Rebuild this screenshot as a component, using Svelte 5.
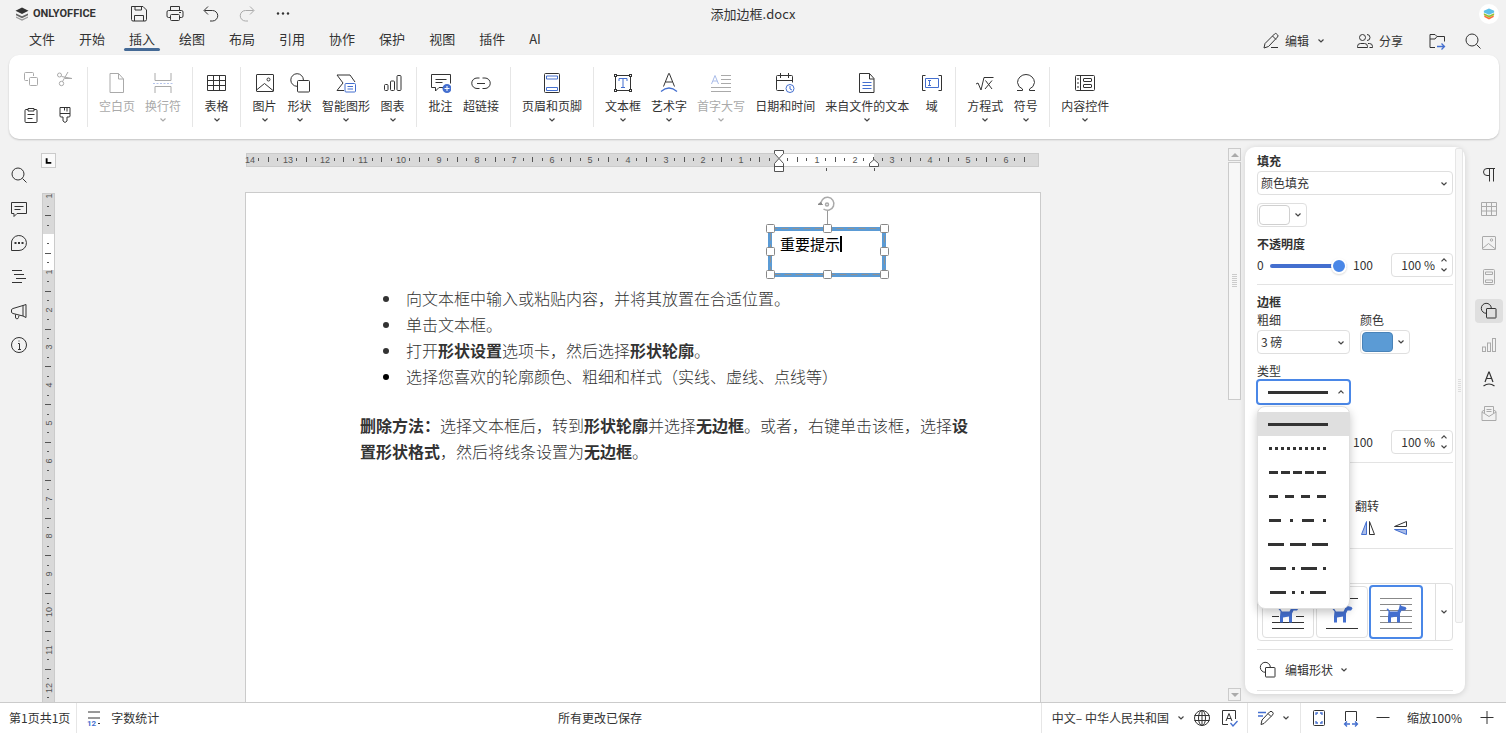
<script>
  const B = '#446fcf';
  const icons = {
    save: `<path d="M2.500 2.500h11.500l3.500 3.500v9.500a1.500 1.500 0 0 1-1.500 1.500H4a1.500 1.500 0 0 1-1.500-1.500z"/><path d="M6 2.500v3.500h6.500V2.500M5.500 17V11.500h9V17"/>`,
    print: `<path d="M5.500 6.500v-4h9v4M5.500 13.500h-2a1.500 1.500 0 0 1-1.500-1.500V8A1.500 1.500 0 0 1 3.500 6.500h13A1.500 1.500 0 0 1 18 8v4a1.500 1.500 0 0 1-1.500 1.500h-2"/><rect x="5.500" y="10.500" width="9" height="6" rx="1"/><path d="M14 8.500h2"/>`,
    undo: `<path d="M7 2.500L3 6.500l4 4M3.500 6.500h8a5 5 0 0 1 0 10.500H9"/>`,
    redo: `<path d="M13 2.500l4 4-4 4M16.500 6.500h-8a5 5 0 0 0 0 10.500H11"/>`,
    dots: `<g fill="currentColor" stroke="none"><circle cx="5" cy="9.500" r="1.200"/><circle cx="10" cy="9.500" r="1.200"/><circle cx="15" cy="9.500" r="1.200"/></g>`,
    copy: `<path d="M7 11.500H4.500a1 1 0 0 1-1-1v-6a1 1 0 0 1 1-1h7a1 1 0 0 1 1 1V7"/><rect x="8.500" y="8.500" width="8" height="8" rx="1"/>`,
    cut: `<circle cx="4.500" cy="6" r="2"/><circle cx="6.500" cy="14.500" r="2.200"/><path d="M6.500 7.500L17 9.500M7.500 12.500L13 3M10 9.500h7"/>`,
    paste: `<path d="M7 4.500H5a1 1 0 0 0-1 1v11a1 1 0 0 0 1 1h10a1 1 0 0 0 1-1v-11a1 1 0 0 0-1-1h-2M7 3.500h6v2.500H7zM6.500 9.500h7M6.500 13.500h5"/>`,
    brush: `<path d="M5 2.500h10v8.500a1 1 0 0 1-1 1h-2v4l-2 1.500L8 16v-4H6a1 1 0 0 1-1-1zM5 8.500h10M9.500 3v2.500M12 3v3.500"/>`,
    page: `<path d="M3 .500h8.500l5 5.500v13.500H3zM11.500 .500V6h5"/>`,
    breaks: `<path d="M2 0v7.500h16V0M2 20v-6.500h16V20"/><path stroke="#b4c4ec" stroke-dasharray="2 1.500" d="M0 10.500h20"/>`,
    table: `<path d="M.5 2.500h18v15h-18zM6.500 2.500v15M12.500 2.500v15M.5 7.500h18M.5 12.500h18"/>`,
    image: `<rect x="1.500" y="1.500" width="17" height="17" rx=".5"/><path d="M1.500 17l8-6.500 8.500 7"/><circle cx="13.500" cy="6.500" r="1.500"/>`,
    shapes: `<path d="M7 13.300A6.300 6.300 0 1 1 13.400 7"/><rect x="7.500" y="7.500" width="12" height="11.500" rx="1"/>`,
    smart: `<path d="M8 17.500H1l6-7.500-6-8h13l5 7"/><rect x="9" y="10.500" width="10.500" height="8.500" rx="1" stroke="${B}"/><path stroke="${B}" d="M11.500 13.500h5.500M11.500 16h5.500"/>`,
    chart: `<rect x="1.500" y="11.500" width="3.500" height="6" rx="1"/><rect x="7.500" y="8" width="4" height="9.500" rx="1"/><rect x="14" y="2.500" width="4" height="15" rx="1"/>`,
    comment: `<path d="M12 14.500H8L4.500 18v-3.500h-4v-13h19v9"/><path d="M4.500 6.500h11M4.500 9.500h7"/><circle cx="16" cy="15.500" r="4.500" fill="${B}" stroke="none"/><path stroke="#fff" d="M16 13v5M13.500 15.500h5"/>`,
    link: `<path d="M8.500 5H6a5 5 0 0 0 0 10.500h2.500M11.500 5H14a5 5 0 0 1 0 10.500h-2.500M6 10.500h8"/>`,
    header: `<rect x="2.500" y=".5" width="15" height="19" rx="1"/><path stroke="${B}" d="M4.500 3h11v3h-11zM4.500 14.500h11v3h-11z"/>`,
    textbox: `<path d="M3 2.500h14M3 17.500h14M2.500 3v14M17.500 3v14"/><g fill="#fff"><rect x="1.500" y="1.500" width="2" height="2"/><rect x="16.500" y="1.500" width="2" height="2"/><rect x="1.500" y="16.500" width="2" height="2"/><rect x="16.500" y="16.500" width="2" height="2"/></g><path stroke="${B}" d="M6 8V5.500h8V8M10 5.500v9M8 14.500h4"/>`,
    wordart: `<path d="M4.500 13.500L9.700 .500h.6l5.200 13M6.500 9h7"/><path stroke="${B}" stroke-width="1.300" d="M2 18.500q8-7 16 0"/>`,
    dropcap: `<path stroke="#a9bce9" d="M.500 11L4 2.500 7.500 11M2 8h4"/><path d="M10 2.500h10M10 6.500h10M10 10.500h10M0 14.500h20M0 18.500h20"/>`,
    calendar: `<path d="M9 17.500H2.500a1 1 0 0 1-1-1v-13a1 1 0 0 1 1-1h14a1 1 0 0 1 1 1v6M1.500 7.500h16M5.500 0v5M13.500 0v5"/><circle cx="15" cy="15.500" r="4" stroke="${B}"/><path stroke="${B}" d="M15 13v3l2 1"/>`,
    doc: `<path d="M2.500 .500h10l4.500 5v14H2.500zM12.500 .500V6H17"/><path stroke="${B}" d="M5.500 9.500h9M5.500 12.500h9M5.500 15.500h9"/>`,
    field: `<path d="M3.500 2.500h-3v15h3M16.500 2.500h3v15h-3"/><path stroke="${B}" d="M3.500 5.500h13v9h-13zM6 7.500h3M6 12.500h3M7.500 7.500v5"/>`,
    equation: `<path d="M1 11l2-1 3 7L9 4.500h9.500M10.500 7.500l6.500 8.500M17 7.500l-7 8.500"/>`,
    omega: `<path d="M1 17.500h5.500v-1.500A8.300 8 0 0 1 1.500 9.500 8.500 8.300 0 0 1 10 1.500a8.500 8.300 0 0 1 8.500 8 8.300 8 0 0 1-5 6.500v1.500H19"/>`,
    controls: `<rect x=".5" y="2.500" width="19" height="15" rx="1"/><path d="M5.500 2.500v15M2 6h2M2 10h2M2 14h2"/><rect x="8.500" y="5.500" width="8" height="3" rx=".5"/><rect x="8.500" y="11.500" width="8" height="3" rx=".5"/>`,
    pencil: `<path d="M3 17l1-4.500L13.500 3a1.500 1.500 0 0 1 2.200 0l.8.800a1.500 1.500 0 0 1 0 2.200L7.500 15.500zM11.500 5l3.500 3.500M10 16.500h7"/>`,
    people: `<circle cx="7.500" cy="6.500" r="3"/><path d="M12 3.500a3 3 0 1 1 0 6M2.500 16.500v-1a3 3 0 0 1 3-3h4a3 3 0 0 1 3 3v1zM13 12.500h1.500a3 3 0 0 1 3 3v1h-3"/>`,
    folder: `<path d="M8 16.500H3V3.500h5l2 2h7.500v5M3 8h5l2-2.500"/><path stroke="${B}" stroke-width="1.300" d="M10 15.500h7.500M14.500 12.500l3 3-3 3"/>`,
    search: `<circle cx="9" cy="9" r="6"/><path d="M13.500 13.500l4 4"/>`,
    note: `<path d="M2.500 3.500h15v11H8l-3 3v-3H2.500zM5.500 7.500h9M5.500 10.500h6"/>`,
    chat: `<path d="M2.500 17.500v-6.500a7.500 7.500 0 1 1 7.500 6.500z"/><g fill="currentColor" stroke="none"><path d="M5.500 9h2v2h-2zM9 9h2v2H9zM12.500 9h2v2h-2z"/></g>`,
    outline: `<path d="M3 3.500h10M5 7.500h10M7 11.500h10M3 15.500h10"/>`,
    horn: `<path d="M14 4.500L4 7.500l-1.500 1v3l1.500 1 10 2.500M14 4.500l3-1v13l-3-1.500zM6.500 13.500v2.500a1.500 1.500 0 0 0 3 .5l.5-2"/>`,
    info: `<circle cx="10" cy="10" r="7.500"/><path d="M9 8.500h1.500V14M9 14.500h3M10 5.500v1"/>`,
    para: `<path d="M16 3.500H8a3.500 3.500 0 0 0 0 7h2.500M10.500 3.500v13M14.500 3.500v13"/>`,
    tableS: `<path d="M2.500 3.500h15v13h-15zM7.500 3.500v13M12.500 3.500v13M2.500 7.500h15M2.500 12h15"/>`,
    imageS: `<rect x="3.500" y="3.500" width="13" height="13" rx=".5"/><path d="M3.500 15.500l6-5 7 5.500"/><circle cx="12.500" cy="7" r="1.200"/>`,
    headerS: `<rect x="4.500" y="2.500" width="11" height="15" rx="1"/><path d="M6.500 5h7v2.500h-7zM6.500 13h7v2.500h-7z"/>`,
    shapesS: `<path d="M7.500 12.300A5 5 0 1 1 12.300 7"/><rect x="7.500" y="7.500" width="9.500" height="9.500" rx=".5"/>`,
    chartS: `<rect x="3.500" y="12" width="3" height="4.500"/><rect x="8.500" y="8" width="3" height="8.500"/><rect x="13.500" y="3.500" width="3" height="13"/>`,
    artS: `<path stroke-width="1.200" d="M6 13l3.800-10h.4L14 13M7.500 9.500h5M4.500 17q5.500-4 11 0"/>`,
    mailS: `<path d="M5.500 7L3 8.500v9h14v-9L14.500 7M3 9l7 4.500L17 9M5.500 10V3.500h9V10M7.500 6.500h5M7.500 8.500h5"/>`,
    count: `<path d="M3 4h12M3 10h12M13 15.500h2"/><text x="2" y="18" font-size="8" font-weight="700" font-family="Roboto" fill="${B}" stroke="none">12</text>`,
    globe: `<circle cx="10" cy="10" r="7.500"/><ellipse cx="10" cy="10" rx="3.500" ry="7.500"/><path d="M2.500 7.500h15M2.500 12.500h15M10 2.500v15"/>`,
    spell: `<path d="M9 16.500H3.500v-14h13V11M7 13l3-7.500 3 7.500M8 10.500h4"/><path stroke="${B}" stroke-width="1.300" d="M11.500 15l2.500 3 4.500-5"/>`,
    review: `<path stroke="${B}" stroke-width="1.300" d="M2 4.500h8M2 8h5"/><path d="M5 16.500l3-1 8.500-8.500a2 2 0 0 0-3-3L6 12zM12 5.500l3 3"/>`,
    fitPage: `<rect x="4.500" y="2.500" width="11" height="15" rx="1"/><path stroke="${B}" stroke-width="1.300" d="M9 5H7v2M11 5h2v2M9 15H7v-2M11 15h2v-2"/>`,
    fitWidth: `<path d="M4.500 13V3.500h11V13"/><path stroke="${B}" stroke-width="1.300" d="M9 16H4M6 13.500L3.500 16 6 18.500M11 16h5M14 13.500l2.500 2.500-2.500 2.500"/>`,
    minus: `<path d="M3.500 9.500h13"/>`,
    plus: `<path d="M3.500 9.500h13M10 3v13"/>`,
    flipH: `<path fill="#a9bce9" stroke="${B}" d="M8.500 3.500v13h-5z"/><path d="M11.500 3.500v13h5z"/>`,
    flipV: `<path d="M16.500 3.500v5h-12z"/><path fill="#a9bce9" stroke="${B}" d="M16.500 16.500v-5h-12z"/>`,
  };

  const tabs = ['文件', '开始', '插入', '绘图', '布局', '引用', '协作', '保护', '视图', '插件', 'AI'];
  const groups = [
    [['page', '空白页', 0, 1], ['breaks', '换行符', 1, 1]],
    [['table', '表格', 1]],
    [['image', '图片', 1], ['shapes', '形状', 1], ['smart', '智能图形', 1], ['chart', '图表', 1]],
    [['comment', '批注', 0], ['link', '超链接', 0]],
    [['header', '页眉和页脚', 1]],
    [['textbox', '文本框', 1], ['wordart', '艺术字', 1], ['dropcap', '首字大写', 1, 1], ['calendar', '日期和时间', 0], ['doc', '来自文件的文本', 1], ['field', '域', 0]],
    [['equation', '方程式', 1], ['omega', '符号', 1]],
    [['controls', '内容控件', 1]],
  ];
  const leftRail = ['search', 'note', 'chat', 'outline', 'horn', 'info'];
  const rightRail = [['para', 0], ['tableS', 1], ['imageS', 1], ['headerS', 1], ['shapesS', 0], ['chartS', 1], ['artS', 0], ['mailS', 1]];
  const lines = [
    [0, 60, 'none'], [1, 58, '3 3'], [1, 58, '9 3'], [1, 58, '9 7'],
    [1, 58, '12 9 3 9'], [0, 60, '16 6'], [2, 58, '16 6 3 6'], [2, 58, '16 6 3 6 3 6 16'],
  ];

  // Ruler marks: one number per centimetre, with quarter ticks between them.
  const CM = 37.8;
  function marks(zero, length) {
    const out = [];
    for (let q = -70; q < 70; q++) {
      const at = Math.round(zero + (q * CM) / 4);
      if (at < 0 || at > length || q === 0) continue;
      out.push({ at, kind: q % 4 === 0 ? 'num' : q % 2 === 0 ? 'half' : 'quarter', n: Math.abs(q / 4) });
    }
    return out;
  }
  const hMarks = marks(533, 782);
  const vMarks = marks(41, 505);

  const handles = [[3, 3], [60, 3], [117, 3], [3, 26], [117, 26], [3, 49], [60, 49], [117, 49]];
</script>

{#snippet icon(name)}
  <svg class="icon" viewBox="0 0 20 20" width="20" height="20" aria-hidden="true">{@html icons[name]}</svg>
{/snippet}

{#snippet caret(up = false)}
  <svg class="caret" viewBox="0 0 8 6" width="8" height="6" aria-hidden="true"><path d={up ? 'M1.500 4.300L4 1.800l2.500 2.500' : 'M1.500 1.500L4 4l2.500-2.500'} /></svg>
{/snippet}

{#snippet opacity(label)}
  <div class="opacity">
    <span>0</span>
    <input class="range" type="range" min="0" max="100" value="100" aria-label={label} />
    <span class="max">100</span>
    <div class="spin">
      <input type="text" value="100 %" aria-label={label} />
      <div class="steps">
        <button aria-label="+">{@render caret(true)}</button>
        <button aria-label="-">{@render caret()}</button>
      </div>
    </div>
  </div>
{/snippet}

{#snippet dog()}
  <path fill="#446fcf" d="M15.500 22l1.500-.5 2 3h7.500l1.500-3 1-4.500 1.500 2 4 1 1 1.500-1.500 2h-3.500l-1.500 3v9h-3v-6l-6 1v5h-3v-6l.5-5z" />
{/snippet}

<div class="app">
  <header>
    <div class="titlebar">
      <div class="quick">
        <svg class="logo" viewBox="0 0 14 14" width="14" height="14" aria-hidden="true">
          <path fill="#999" d="M1 9.500l6 2.800 6-2.800v1.200L7 13.800 1 10.700z" />
          <path fill="#666" d="M1 6.500l6 2.800 6-2.800v1.700L7 11.200 1 8.200z" />
          <path fill="#333" d="M7 .500l6.500 3.200L7 7 .500 3.700z" />
        </svg>
        <span class="brand">ONLYOFFICE</span>
        <div class="quick-buttons">
          {#each ['save', 'print', 'undo', 'redo', 'dots'] as name}
            <button class:off={name === 'redo'} aria-label={name}>{@render icon(name)}</button>
          {/each}
        </div>
      </div>
      <span class="doc-name">添加边框.docx</span>
      <span class="avatar">
        <svg viewBox="0 0 14 14" width="12" height="12" aria-hidden="true">
          <path fill="#ff6f3d" d="M1.500 8.500L7 11l5.500-2.500v2L7 13.500l-5.500-3z" />
          <path fill="#95c038" d="M1 6l6 2.800L13 6v2.200L7 11.200 1 8.200z" />
          <path fill="#5dc0e8" d="M7 .500l6 2.800v1.900L7 8 1 5.200V3.300z" />
        </svg>
      </span>
    </div>
    <div class="menubar">
      <nav>
        {#each tabs as tab}
          <button class:active={tab === '插入'}><span>{tab}</span></button>
        {/each}
      </nav>
      <div class="modes">
        <button>{@render icon('pencil')}<span>编辑</span>{@render caret()}</button>
        <button>{@render icon('people')}<span>分享</span></button>
        <button aria-label="folder">{@render icon('folder')}</button>
        <button aria-label="search">{@render icon('search')}</button>
      </div>
    </div>
  </header>

  <div class="toolbar">
    <div class="clipboard">
      <button class="off" aria-label="copy">{@render icon('copy')}</button>
      <button class="off" aria-label="cut">{@render icon('cut')}</button>
      <button aria-label="paste">{@render icon('paste')}</button>
      <button aria-label="format">{@render icon('brush')}</button>
    </div>
    {#each groups as group}
      <div class="group">
        {#each group as [name, label, drop, off]}
          <button class="tool" class:off>
            {@render icon(name)}
            <span>{label}</span>
            {#if drop}{@render caret()}{/if}
          </button>
        {/each}
      </div>
    {/each}
  </div>

  <main>
    <aside class="left-rail">
      {#each leftRail as name}
        <button aria-label={name}>{@render icon(name)}</button>
      {/each}
    </aside>

    <div class="v-ruler">
      <button class="tab-stop" aria-label="tab"><svg viewBox="0 0 14 14" width="13" height="13"><path fill="none" stroke="#000" stroke-width="2" d="M5 4.500v5h5" /></svg></button>
      <svg class="v-scale" width="13" height="700" aria-hidden="true">
        <rect x=".5" y=".5" width="12" height="699" fill="#d9d9d9" stroke="#cbcbcb" />
        <rect x="1" y="41" width="11" height="36" fill="#fff" />
        {#each vMarks as m}
          {#if m.kind === 'num'}
            <text transform="translate(10 {m.at}) rotate(-90)" text-anchor="middle">{m.n}</text>
          {:else}
            <path d={m.kind === 'half' ? `M3 ${m.at}.5h6` : `M5 ${m.at}.5h2`} />
          {/if}
        {/each}
      </svg>
    </div>

    <section class="canvas">
      <svg class="h-scale" viewBox="0 0 796 26" height="26" aria-hidden="true">
        <rect x="1.500" y="4.500" width="792" height="13" fill="#d9d9d9" stroke="#cbcbcb" />
        <rect x="534" y="5" width="95" height="12" fill="#fff" />
        {#each hMarks as m}
          {#if m.kind === 'num'}
            <text x={m.at + 1} y="14" text-anchor="middle">{m.n}</text>
          {:else}
            <path d={m.kind === 'half' ? `M${m.at}.5 8v5` : `M${m.at}.5 9v3`} />
          {/if}
        {/each}
        <path d="M581.500 19v3M629.500 19v3" />
        <g fill="#fff" stroke="#555">
          <path d="M529.500 1.500h9v3l-4.500 5-4.500-5z" />
          <path d="M529.500 22.500h9v-8l-4.500-5-4.500 5zM529.500 17.500h9" />
          <path d="M624.500 17.500h9v-3l-4.500-4-4.500 4z" />
        </g>
      </svg>
      <article class="page">
        <ul>
          <li>向文本框中输入或粘贴内容，并将其放置在合适位置。</li>
          <li>单击文本框。</li>
          <li>打开<b>形状设置</b>选项卡，然后选择<b>形状轮廓</b>。</li>
          <li class="current">选择您喜欢的轮廓颜色、粗细和样式（实线、虚线、点线等）</li>
        </ul>
        <p><b>删除方法：</b>选择文本框后，转到<b>形状轮廓</b>并选择<b>无边框</b>。或者，右键单击该框，选择<b>设置形状格式</b>，然后将线条设置为<b>无边框</b>。</p>
        <div class="text-box">
          <span>重要提示</span><i></i>
          <svg viewBox="0 0 122 84" width="122" height="84" aria-hidden="true">
            <g transform="translate(0 29)">
              <rect x="3" y="4" width="114" height="46" fill="none" stroke="#5b9bd5" stroke-width="4" />
              <rect x="3.500" y="3.500" width="114" height="46" fill="none" stroke="#929292" stroke-dasharray="7 4" />
              <path d="M60.500-14V0" stroke="#999" />
              {#each handles as [x, y]}
                <rect x={x - 3.5} y={y - 3.5} width="8" height="8" rx="1" fill="#fff" stroke="#888" />
              {/each}
            </g>
            <g fill="none" stroke="#aaa" stroke-width="1.500">
              <path d="M54 9a6.500 6.500 0 1 1 2.500 4" />
              <circle cx="60" cy="8.500" r="1.500" />
              <path d="M51 8.500h4.500l-2-2z" fill="#888" stroke="#888" stroke-width="1" />
            </g>
          </svg>
        </div>
      </article>
    </section>

    <div class="scrollbar">
      <button aria-label="up"><svg viewBox="0 0 8 4" width="8" height="4"><path fill="#aaa" d="M0 4l4-4 4 4z" /></svg></button>
      <div class="thumb"></div>
      <button class="down" aria-label="down"><svg viewBox="0 0 8 4" width="8" height="4"><path fill="#aaa" d="M0 0l4 4 4-4z" /></svg></button>
    </div>

    <aside class="panel">
      <div class="settings">
        <label class="head" for="fill">填充</label>
        <div class="select fill"><select id="fill"><option>颜色填充</option></select>{@render caret()}</div>
        <button class="color" aria-label="填充"><span></span>{@render caret()}</button>
        <h3 class="gap">不透明度</h3>
        {@render opacity('不透明度')}
        <hr />
        <h3 class="gap">边框</h3>
        <div class="stroke">
          <div>
            <label for="size">粗细</label>
            <div class="select"><select id="size"><option>3 磅</option></select>{@render caret()}</div>
          </div>
          <div>
            <span class="caption" id="stroke-color">颜色</span>
            <button class="color blue" aria-labelledby="stroke-color"><span></span>{@render caret()}</button>
          </div>
        </div>
        <span class="caption type-caption" id="type">类型</span>
        <div class="type">
          <button class="type-button" aria-haspopup="listbox" aria-expanded="true" aria-labelledby="type">
            <svg viewBox="0 0 60 3" width="60" height="3"><path d="M0 1.500h60" /></svg>
            {@render caret(true)}
          </button>
          <div class="menu" role="listbox" aria-labelledby="type">
            {#each lines as [from, to, dash], i}
              <div role="option" tabindex="-1" aria-selected={i === 0} class:chosen={i === 0}>
                <svg viewBox="0 0 60 3" width="60" height="3"><path d="M{from} 1.500H{to}" stroke-dasharray={dash} /></svg>
              </div>
            {/each}
          </div>
        </div>
        <div class="stroke-opacity">{@render opacity('边框')}</div>
        <hr class="wide" />
        <div class="flip">
          <span class="caption">翻转</span>
          <div>
            <button aria-label="flip horizontally">{@render icon('flipH')}</button>
            <button aria-label="flip vertically">{@render icon('flipV')}</button>
          </div>
        </div>
        <hr />
        <div class="gallery">
          <button aria-label="wrap 1"><svg viewBox="0 0 50 50" width="50" height="50"><path stroke="#333" d="M9 11.500h32M9 29.500h7M33 29.500h8M9 35.500h32M9 41.500h32" />{@render dog()}</svg></button>
          <button aria-label="wrap 2"><svg viewBox="0 0 50 50" width="50" height="50"><path stroke="#333" d="M9 11.500h32M9 41.500h32" />{@render dog()}</svg></button>
          <button class="chosen" aria-label="wrap 3"><svg viewBox="0 0 50 50" width="50" height="50"><path stroke="#888" d="M9 11.500h32M9 17.500h32M9 23.500h32M9 29.500h32M9 35.500h32M9 41.500h32" />{@render dog()}</svg></button>
          <button class="more" aria-label="more">{@render caret()}</button>
        </div>
        <hr class="wide" />
        <button class="edit-shape">{@render icon('shapesS')}<span>编辑形状</span>{@render caret()}</button>
        <hr />
      </div>
      <div class="panel-scroll"></div>
    </aside>

    <aside class="right-rail">
      {#each rightRail as [name, off], i}
        <button class:off class:active={i === 4} aria-label={name}>{@render icon(name)}</button>
      {/each}
    </aside>
  </main>

  <footer>
    <button class="pages">第1页共1页</button>
    <button class="words">{@render icon('count')}<span>字数统计</span></button>
    <span class="saved">所有更改已保存</span>
    <div class="cell lang">
      <button>中文– 中华人民共和国{@render caret()}</button>
      <button aria-label="language">{@render icon('globe')}</button>
      <button aria-label="spelling">{@render icon('spell')}</button>
    </div>
    <div class="cell review"><button>{@render icon('review')}{@render caret()}</button></div>
    <div class="cell zoom">
      <button aria-label="fit page">{@render icon('fitPage')}</button>
      <button aria-label="fit width">{@render icon('fitWidth')}</button>
      <button aria-label="zoom out">{@render icon('minus')}</button>
      <button class="percent">缩放100%</button>
      <button aria-label="zoom in">{@render icon('plus')}</button>
    </div>
  </footer>
</div>

<style>
  :global(body) { margin: 0; }
  .app, .app * { box-sizing: border-box; }
  .app {
    display: flex;
    flex-direction: column;
    height: 100vh;
    overflow: hidden;
    background: #f2f2f2;
    color: #333;
    font: 12px/16px "Noto Sans CJK SC", sans-serif;
  }
  button, input, select { font: inherit; color: inherit; }
  button { display: flex; align-items: center; justify-content: center; padding: 0; border: 0; background: none; white-space: nowrap; }
  svg { display: block; flex: none; }
  .icon { fill: none; stroke: currentColor; stroke-width: 1; }
  .caret { fill: none; stroke: #444; stroke-width: 1.2; }
  .off { color: #aaa; }
  .off .caret { stroke: #aaa; }

  .titlebar { display: grid; grid-template-columns: 1fr auto 1fr; align-items: center; height: 27px; }
  .quick { display: flex; align-items: center; padding-left: 15px; }
  .brand { margin-left: 4px; width: 60px; font: 700 11px/16px Roboto, sans-serif; }
  .quick-buttons { display: flex; gap: 16px; margin-left: 36px; }
  .doc-name { font-size: 13px; line-height: 18px; }
  .avatar { justify-self: end; display: grid; place-items: center; width: 20px; height: 20px; margin-right: 7px; border-radius: 50%; background: #fff; }
  .menubar { display: flex; justify-content: space-between; height: 28px; }
  nav { display: flex; padding-left: 17px; }
  nav button { padding: 0 12px; height: 24px; font-size: 13px; position: relative; }
  nav .active::after { content: ""; position: absolute; left: 7px; right: 7px; bottom: 0; height: 3px; border-radius: 2px; background: #446995; }
  .modes { display: flex; align-items: center; padding-right: 23px; }
  .modes button { gap: 4px; }
  .modes .caret { margin-left: 4px; }
  .modes button:nth-child(2) { margin-left: 30px; }
  .modes button:nth-child(3) { margin-left: 24px; }
  .modes button:nth-child(4) { margin-left: 16px; }

  .toolbar { display: flex; flex: none; height: 84px; margin: 0 7px 0 9px; padding: 12px 0; border-radius: 10px; background: #fff; box-shadow: 0 1px 2px rgba(0, 0, 0, .2); }
  .clipboard { display: grid; grid-template-columns: 34px 34px; grid-template-rows: 24px 24px; row-gap: 12px; width: 78px; padding-left: 5px; }
  .group { display: flex; height: 60px; padding: 6px 6px 0; border-left: 1px solid #e6e6e6; }
  .tool { flex-direction: column; justify-content: flex-start; min-width: 35px; padding: 0 5px; }
  .tool span { margin: 5px 0 3px; }

  main { display: flex; flex: 1; min-height: 0; }
  .left-rail { display: flex; flex-direction: column; gap: 14px; width: 41px; padding: 26px 0 0 9px; }
  .left-rail button { width: 20px; height: 20px; }
  .v-ruler { width: 17px; overflow: hidden; }
  .tab-stop { width: 15px; height: 15px; margin: 14px 0 25px; border: 1px solid #cbcbcb; background: #fafafa; }
  .v-scale { margin-left: 1px; }
  .v-scale path, .h-scale path { fill: none; stroke: #555; }
  .h-scale g path { fill: #fff; }
  .v-scale text, .h-scale text { fill: #555; font: 9px "Liberation Sans", sans-serif; }
  .canvas { flex: 1; display: flex; flex-direction: column; align-items: center; padding-top: 10px; overflow: hidden; }
  .h-scale { width: 796px; overflow: hidden; }
  .page { position: relative; flex: none; width: 796px; min-height: 1123px; margin-top: 17px; padding: 92px 69px 0 114px; border: 1px solid #cbcbcb; background: #fff; font-size: 16px; line-height: 26px; font-weight: 300; }
  .page ul { margin: 0; padding: 0 0 0 46px; list-style: none; }
  .page li { position: relative; }
  .page li::before { content: ""; position: absolute; left: -23px; top: 11px; width: 6px; height: 6px; border-radius: 50%; background: #333; }
  .page .current::before { background: #000; }
  .page b { font-weight: 700; }
  .page p { margin: 23px -1px 0 0; }
  .text-box { position: absolute; left: 521px; top: 32px; width: 122px; height: 52px; padding: 6px 0 0 13px; display: flex; color: #000; font-size: 15px; font-weight: 400; }
  .text-box i { width: 2px; height: 16px; margin-top: 5px; background: #000; }
  .text-box svg { position: absolute; left: 0; top: -29px; overflow: visible; }

  .scrollbar { display: flex; flex-direction: column; width: 13px; padding-top: 9px; }
  .scrollbar button { width: 13px; height: 13px; border: 1px solid #cbcbcb; }
  .scrollbar .thumb { height: 238px; margin-top: 1px; border: 1px solid #cbcbcb; background: #f7f7f7 repeating-linear-gradient(#cbcbcb 0 1px, transparent 1px 2px) center / 5px 14px no-repeat; }
  .scrollbar .down { margin-top: auto; margin-bottom: 1px; }

  .panel { display: flex; width: 220px; height: 547px; margin: 8px 0 0 4px; border-radius: 10px; background: #fff; box-shadow: 0 1px 6px rgba(0, 0, 0, .14); }
  .settings { display: flex; flex-direction: column; width: 208px; padding: 6px 0 0 12px; }
  h3, .head { margin: 0; font-size: 12px; line-height: 16px; font-weight: 700; }
  .gap { margin-top: 9px; }
  label, .caption { display: block; }
  hr { width: 100%; height: 1px; margin: 7px 0 0; border: 0; background: #e3e3e3; flex: none; }
  .wide { margin-top: 8px; }
  .select { position: relative; height: 24px; }
  .fill { margin-top: 2px; }
  .select select { width: 100%; height: 24px; padding: 0 3px; border: 1px solid #dfdfdf; border-radius: 4px; background: #fff; appearance: none; }
  .select .caret { position: absolute; right: 5px; top: 10px; pointer-events: none; }
  .color { width: 50px; height: 24px; justify-content: flex-start; padding-left: 1px; gap: 4px; border: 1px solid #dfdfdf; border-radius: 4px; }
  .fill + .color { margin-top: 8px; }
  .color span { width: 31px; height: 20px; border: 1px solid #d0d0d0; border-radius: 4px; background: #fff; }
  .color.blue span { background: #5b9bd5; border-color: #4983b8; }
  .opacity { display: flex; align-items: center; height: 24px; margin-top: 1px; }
  .opacity > span { width: 13px; }
  .opacity > .max { width: 38px; margin-left: 6px; }
  .range { width: 77px; height: 16px; margin: 2px 0 0; appearance: none; background: none; }
  .range::-webkit-slider-runnable-track { height: 4px; border-radius: 2px; background: #446fcf; }
  .range::-webkit-slider-thumb { appearance: none; width: 16px; height: 16px; margin-top: -6px; border: 2px solid #fff; border-radius: 50%; background: #4a87e7; box-shadow: 0 1px 2px rgba(0, 0, 0, .15); }
  .spin { display: flex; width: 62px; height: 24px; border: 1px solid #dfdfdf; border-radius: 4px; }
  .spin input { width: 43px; padding: 0; border: 0; outline: 0; background: none; text-align: right; }
  .steps { display: flex; flex-direction: column; justify-content: space-between; padding: 3px 0 3px 5px; }
  .stroke { display: flex; gap: 10px; margin-top: 2px; }
  .stroke > div:first-child { width: 93px; }
  .stroke .select, .stroke .color { margin-top: 2px; }
  .type-caption { margin-top: 9px; }
  .type { position: relative; width: 95px; height: 26px; margin-left: -1px; }
  .type-button { justify-content: space-between; width: 95px; height: 26px; padding: 0 4px 0 10px; border: 2px solid #4a87e7; border-radius: 4px; background: #fff; }
  .type-button > svg:first-child path, .menu path { fill: none; stroke: #333; stroke-width: 3; }
  .menu { position: absolute; z-index: 2; left: 1px; top: 27px; width: 93px; padding: 5px 0 4px; border: 1px solid #dfdfdf; border-radius: 8px; background: #fff; box-shadow: 0 4px 10px rgba(0, 0, 0, .22); }
  .menu div { display: flex; align-items: center; height: 24px; padding-left: 10px; }
  .menu .chosen { background: #dfdfdf; }
  .stroke-opacity { margin-top: 24px; }
  .flip { margin: 35px 0 0 98px; }
  .flip > div { display: flex; gap: 12px; margin: 4px 0 3px 3px; }
  .gallery { display: flex; align-items: center; gap: 2px; height: 58px; margin-top: 34px; padding-left: 4px; border: 1px solid #dfdfdf; border-radius: 4px; flex: none; }
  .gallery button { width: 52px; height: 52px; border: 1px solid #dfdfdf; border-radius: 4px; }
  .gallery .chosen { width: 54px; height: 54px; margin-left: -1px; border: 2px solid #4a87e7; }
  .gallery .more { width: 17px; height: 56px; margin-left: auto; border-width: 0 0 0 1px; border-radius: 0; }
  .edit-shape { align-self: flex-start; gap: 7px; height: 24px; margin: 8px 0 1px 1px; }
  .panel-scroll { width: 8px; height: 475px; margin: 1px 0 0 2px; border: 1px solid #e6e6e6; border-radius: 2px; background: #f7f7f7 repeating-linear-gradient(#ddd 0 1px, transparent 1px 2px) center / 3px 14px no-repeat; }

  .right-rail { display: flex; flex-direction: column; gap: 10px; width: 41px; padding: 24px 0 0 10px; }
  .right-rail button { width: 28px; height: 24px; border-radius: 4px; }
  .right-rail .active { background: #dfdfdf; }

  footer { display: flex; align-items: stretch; flex: none; height: 31px; border-top: 1px solid #cbcbcb; background: #fff; }
  .pages { padding: 0 6px 0 9px; border-right: 1px solid #e6e6e6; }
  .words { gap: 6px; margin-left: 8px; }
  .saved { flex: 1; align-self: center; text-align: center; }
  .cell { display: flex; align-items: center; border-left: 1px solid #e6e6e6; }
  .lang { padding: 0 8px 0 10px; gap: 7px; }
  .lang button { gap: 8px; }
  .review { padding: 0 10px 0 8px; }
  .review button { gap: 6px; }
  .zoom { padding: 0 9px 0 8px; gap: 12px; }
  .percent { margin: 0 3px 0 2px; }
</style>
